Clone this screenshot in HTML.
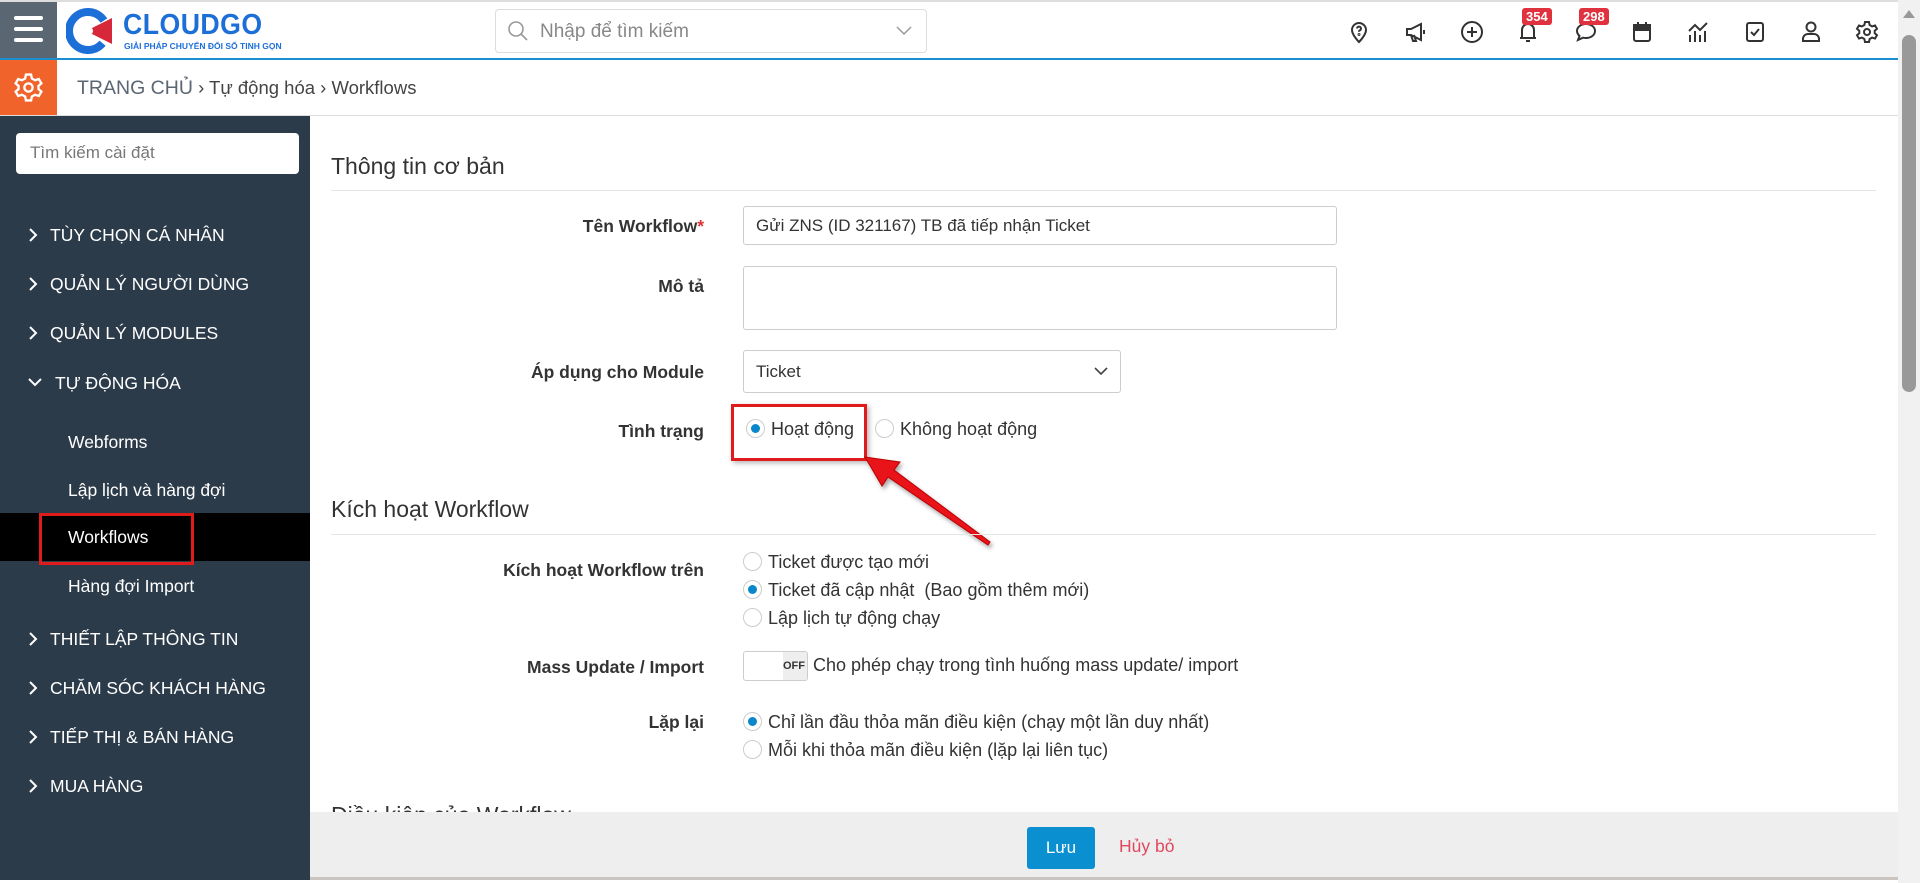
<!DOCTYPE html>
<html><head><meta charset="utf-8"><style>
*{box-sizing:border-box;margin:0;padding:0}
body{width:1920px;height:883px;overflow:hidden;font-family:"Liberation Sans",sans-serif;background:#fff;color:#333;position:relative}
.abs{position:absolute}
.top{left:0;top:0;width:1898px;height:60px;border-top:2px solid #ddd;border-bottom:2px solid #1a8fd0;background:#fff}
.ham{left:0;top:2px;width:57px;height:56px;background:#5a6672}
.ham i{position:absolute;left:14px;width:29px;height:4px;border-radius:2px;background:#fff}
.search{left:495px;top:9px;width:432px;height:44px;border:1px solid #ddd;border-radius:4px;color:#888;font-size:19px;padding:11px 0 0 44px}
.ic{top:20px;width:24px;height:24px}
.badge{top:8px;background:#e0313f;color:#fff;font-size:13px;font-weight:bold;padding:1px 4px;border-radius:3px}
.bc{left:0;top:60px;width:1898px;height:56px;border-bottom:1px solid #ddd;background:#fff}
.gear{left:0;top:60px;width:57px;height:55px;background:#f0632b}
.side{left:0;top:116px;width:310px;height:764px;background:#2c3b4a;color:#fff}
.side .s{position:absolute;left:16px;top:17px;width:283px;height:41px;background:#fff;border-radius:4px;color:#777;font-size:17px;padding:10px 14px}
.m{position:absolute;left:50px;font-size:17.5px;color:#fff}
.m svg{position:absolute;left:-23px;top:2px}
.sub{position:absolute;left:68px;font-size:17.5px;color:#fff}
.main{left:310px;top:116px;width:1588px;height:767px}
h2{position:absolute;left:21px;font-size:23px;font-weight:normal;color:#333}
.hr{position:absolute;left:21px;width:1545px;height:1px;background:#e5e5e5}
.lbl{position:absolute;right:1194px;font-size:17.5px;font-weight:bold;color:#333;text-align:right;white-space:nowrap}
.inp{position:absolute;left:433px;border:1px solid #ccc;border-radius:3px;font-size:17px;padding:9px 12px;color:#333}
.r{position:absolute;font-size:18px;color:#333;white-space:nowrap}
.r b{display:inline-block;width:19px;height:19px;border:1px solid #ccc;border-radius:50%;vertical-align:-3px;margin-right:6px;position:relative;font-weight:normal}
.r b.on:after{content:"";position:absolute;left:4px;top:4px;width:9px;height:9px;border-radius:50%;background:#0a86cb}
.foot{left:310px;top:812px;width:1588px;height:68px;background:#eee;border-bottom:3px solid #c9c4c0}
.sb{left:1898px;top:0;width:22px;height:883px;background:#f1f1f1}
</style></head><body>
<div class="abs top"></div>
<div class="abs ham"><i style="top:14px"></i><i style="top:25px"></i><i style="top:36px"></i></div>
<svg class="abs" style="left:66px;top:8px" width="60" height="46" viewBox="0 0 60 46"><circle cx="22" cy="23" r="19" fill="none" stroke="#1d6fd8" stroke-width="8" stroke-dasharray="95 30" transform="rotate(40 22 23)"/><path d="M20 23 L46 10 L46 36 Z" fill="#d7283a"/><circle cx="23" cy="23" r="4" fill="#fff"/></svg>
<div class="abs" style="left:123px;top:9px;font-size:29px;font-weight:bold;color:#1d6fd8;letter-spacing:0.5px;transform:scaleX(0.92);transform-origin:left">CLOUDGO</div>
<div class="abs" style="left:124px;top:41px;font-size:8.5px;font-weight:bold;color:#1d6fd8">GIẢI PHÁP CHUYỂN ĐỔI SỐ TINH GỌN</div>
<div class="abs search">Nhập để tìm kiếm</div>
<svg class="abs" style="left:507px;top:20px" width="22" height="22" viewBox="0 0 22 22"><circle cx="9" cy="9" r="7" fill="none" stroke="#999" stroke-width="1.6"/><path d="M14 14l6 6" stroke="#999" stroke-width="1.6"/></svg>
<svg class="abs" style="left:896px;top:26px" width="16" height="10"><path d="M1 1l7 7 7-7" fill="none" stroke="#999" stroke-width="1.5"/></svg>
<svg class="abs ic" style="left:1347px" viewBox="0 0 24 24" fill="none" stroke="#333" stroke-width="2"><path d="M12 22s7-7 7-12a7 7 0 0 0-14 0c0 5 7 12 7 12z"/><path d="M10 8.5a2 2 0 1 1 2.5 2c-.5.2-.5.8-.5 1.3"/><circle cx="12" cy="14.5" r=".5"/></svg>
<svg class="abs ic" style="left:1404px" viewBox="0 0 24 24" fill="none" stroke="#333" stroke-width="2"><path d="M3 9h4l10-5v16L7 15H3z M7 15l2 6h3l-2-6 M20 10v4"/></svg>
<svg class="abs ic" style="left:1460px" viewBox="0 0 24 24" fill="none" stroke="#333" stroke-width="2"><circle cx="12" cy="12" r="10"/><path d="M12 7v10M7 12h10"/></svg>
<svg class="abs ic" style="left:1516px" viewBox="0 0 24 24" fill="none" stroke="#333" stroke-width="2"><path d="M6 18V10a6 6 0 0 1 12 0v8M4 18h16M10 21h4"/></svg>
<svg class="abs ic" style="left:1574px" viewBox="0 0 24 24" fill="none" stroke="#333" stroke-width="2"><path d="M12 4c5 0 9 3 9 7s-4 7-9 7c-1 0-2 0-3-.3L4 20l1.5-4C4 14.5 3 13 3 11c0-4 4-7 9-7z"/></svg>
<svg class="abs ic" style="left:1630px" viewBox="0 0 24 24" fill="none" stroke="#333" stroke-width="2"><rect x="4" y="5" width="16" height="16" rx="2"/><path d="M4 10h16M8 2v5M16 2v5" /><rect x="4" y="5" width="16" height="5" fill="#333"/></svg>
<svg class="abs ic" style="left:1686px" viewBox="0 0 24 24" fill="none" stroke="#333" stroke-width="2"><path d="M3 11l6-6 5 5 7-7M4 15v7M9 11v11M14 15v7M19 11v11"/></svg>
<svg class="abs ic" style="left:1743px" viewBox="0 0 24 24" fill="none" stroke="#333" stroke-width="2"><rect x="4" y="3" width="16" height="18" rx="2"/><path d="M8 12l3 3 5-6"/></svg>
<svg class="abs ic" style="left:1799px" viewBox="0 0 24 24" fill="none" stroke="#333" stroke-width="2"><circle cx="12" cy="7" r="4.5"/><path d="M4 21v-2a5 5 0 0 1 5-5h6a5 5 0 0 1 5 5v2z"/></svg>
<svg class="abs ic" style="left:1855px" viewBox="0 0 24 24" fill="none" stroke="#333" stroke-width="2"><circle cx="12" cy="12" r="3"/><path d="M10 2h4l.6 3 2.5 1.4 2.9-1 2 3.4-2.3 2v2.4l2.3 2-2 3.4-2.9-1-2.5 1.4-.6 3h-4l-.6-3-2.5-1.4-2.9 1-2-3.4 2.3-2v-2.4L2 8.8l2-3.4 2.9 1L9.4 5z"/></svg>
<div class="abs badge" style="left:1522px">354</div>
<div class="abs badge" style="left:1579px">298</div>

<div class="abs bc"></div>
<div class="abs gear"><svg style="position:absolute;left:13px;top:12px" width="31" height="31" viewBox="0 0 24 24" fill="none" stroke="#fff" stroke-width="1.8"><circle cx="12" cy="12" r="3.2"/><path d="M10 2h4l.6 3 2.5 1.4 2.9-1 2 3.4-2.3 2v2.4l2.3 2-2 3.4-2.9-1-2.5 1.4-.6 3h-4l-.6-3-2.5-1.4-2.9 1-2-3.4 2.3-2v-2.4L2 8.8l2-3.4 2.9 1L9.4 5z"/></svg></div>
<div class="abs" style="left:77px;top:77px;font-size:18.5px;color:#444"><span style="font-size:19.5px;color:#5a6672">TRANG CHỦ</span> <span style="color:#444">›</span> Tự động hóa › Workflows</div>

<div class="abs side">
<div class="s">Tìm kiếm cài đặt</div>
<div class="m" style="top:109px"><svg width="12" height="16"><path d="M3 2l6 6-6 6" fill="none" stroke="#fff" stroke-width="2"/></svg>TÙY CHỌN CÁ NHÂN</div>
<div class="m" style="top:158px"><svg width="12" height="16"><path d="M3 2l6 6-6 6" fill="none" stroke="#fff" stroke-width="2"/></svg>QUẢN LÝ NGƯỜI DÙNG</div>
<div class="m" style="top:207px"><svg width="12" height="16"><path d="M3 2l6 6-6 6" fill="none" stroke="#fff" stroke-width="2"/></svg>QUẢN LÝ MODULES</div>
<div class="m" style="top:257px;left:55px"><svg width="16" height="16" style="left:-28px;top:1px"><path d="M2 5l6 6 6-6" fill="none" stroke="#fff" stroke-width="2"/></svg>TỰ ĐỘNG HÓA</div>
<div class="sub" style="top:316px">Webforms</div>
<div class="sub" style="top:364px">Lập lịch và hàng đợi</div>
<div style="position:absolute;left:0;top:397px;width:310px;height:48px;background:#000"></div>
<div style="position:absolute;left:39px;top:397px;width:155px;height:52px;border:3px solid #e01b1b"></div>
<div class="sub" style="top:411px">Workflows</div>
<div class="sub" style="top:460px">Hàng đợi Import</div>
<div class="m" style="top:513px"><svg width="12" height="16"><path d="M3 2l6 6-6 6" fill="none" stroke="#fff" stroke-width="2"/></svg>THIẾT LẬP THÔNG TIN</div>
<div class="m" style="top:562px"><svg width="12" height="16"><path d="M3 2l6 6-6 6" fill="none" stroke="#fff" stroke-width="2"/></svg>CHĂM SÓC KHÁCH HÀNG</div>
<div class="m" style="top:611px"><svg width="12" height="16"><path d="M3 2l6 6-6 6" fill="none" stroke="#fff" stroke-width="2"/></svg>TIẾP THỊ &amp; BÁN HÀNG</div>
<div class="m" style="top:660px"><svg width="12" height="16"><path d="M3 2l6 6-6 6" fill="none" stroke="#fff" stroke-width="2"/></svg>MUA HÀNG</div>
</div>

<div class="abs main">
<h2 style="top:37px">Thông tin cơ bản</h2>
<div class="hr" style="top:74px"></div>
<div class="lbl" style="top:100px">Tên Workflow<span style="color:#d33">*</span></div>
<div class="inp" style="top:90px;width:594px;height:39px;padding-top:9px">Gửi ZNS (ID 321167) TB đã tiếp nhận Ticket</div>
<div class="lbl" style="top:160px">Mô tả</div>
<div class="inp" style="top:150px;width:594px;height:64px"></div>
<div class="lbl" style="top:246px">Áp dụng cho Module</div>
<div class="inp" style="top:234px;width:378px;height:43px;padding-top:11px">Ticket<svg style="position:absolute;right:12px;top:16px" width="14" height="9"><path d="M1 1l6 6 6-6" fill="none" stroke="#444" stroke-width="1.6"/></svg></div>
<div class="lbl" style="top:305px">Tình trạng</div>
<div class="r" style="left:436px;top:303px"><b class="on"></b>Hoạt động</div>
<div class="r" style="left:565px;top:303px"><b></b>Không hoạt động</div>
<div style="position:absolute;left:421px;top:288px;width:136px;height:57px;border:3px solid #e01b1b;box-shadow:2px 2px 5px rgba(0,0,0,.3)"></div>
<svg style="position:absolute;left:550px;top:336px" width="140" height="100"><path d="M5 5 L40 10 L34 18 L130 90 L128 93 L28 25 L22 34 Z" fill="#e8141a" stroke="#b00" stroke-width="1" style="filter:drop-shadow(2px 3px 2px rgba(0,0,0,.35))"/></svg>
<h2 style="top:380px">Kích hoạt Workflow</h2>
<div class="hr" style="top:418px"></div>
<div class="lbl" style="top:444px">Kích hoạt Workflow trên</div>
<div class="r" style="left:433px;top:436px"><b></b>Ticket được tạo mới</div>
<div class="r" style="left:433px;top:464px"><b class="on"></b>Ticket đã cập nhật&nbsp; (Bao gồm thêm mới)</div>
<div class="r" style="left:433px;top:492px"><b></b>Lập lịch tự động chạy</div>
<div class="lbl" style="top:541px">Mass Update / Import</div>
<div style="position:absolute;left:433px;top:535px;width:65px;height:30px;border:1px solid #ccc;border-radius:3px;overflow:hidden"><div style="position:absolute;right:0;top:0;width:24px;height:28px;background:#eee;font-size:11px;font-weight:bold;padding-top:8px;color:#333">OFF</div></div>
<div class="r" style="left:503px;top:539px">Cho phép chạy trong tình huống mass update/ import</div>
<div class="lbl" style="top:596px">Lặp lại</div>
<div class="r" style="left:433px;top:596px"><b class="on"></b>Chỉ lần đầu thỏa mãn điều kiện (chạy một lần duy nhất)</div>
<div class="r" style="left:433px;top:624px"><b></b>Mỗi khi thỏa mãn điều kiện (lặp lại liên tục)</div>
<h2 style="top:686px">Điều kiện của Workflow</h2>
</div>
<div class="abs foot">
<div style="position:absolute;left:717px;top:15px;width:68px;height:42px;background:#0a8fd1;border-radius:3px;color:#fff;font-size:17px;text-align:center;padding-top:11px">Lưu</div>
<div style="position:absolute;left:809px;top:24px;color:#e0485e;font-size:17.5px">Hủy bỏ</div>
</div>
<div class="abs sb"><div style="position:absolute;left:4px;top:35px;width:14px;height:357px;background:#999;border-radius:7px"></div><svg style="position:absolute;left:5px;top:10px" width="12" height="8"><path d="M6 0l6 8H0z" fill="#999"/></svg></div>
</body></html>
